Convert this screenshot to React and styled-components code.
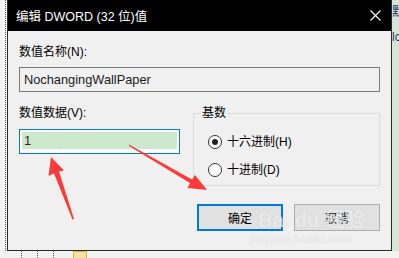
import React from "react";
import styled, { createGlobalStyle } from "styled-components";

const Global = createGlobalStyle`
  body {
    margin: 0;
    background: #f2f2f2;
    font-family: "Liberation Sans", "Noto Sans CJK SC", sans-serif;
  }
`;

const Screen = styled.div`
  position: relative;
  width: 399px;
  height: 258px;
  overflow: hidden;
  display: flex;
  flex-direction: column;
`;

const Row = styled.div`
  display: flex;
  height: 251px;
`;

const Gutter = styled.div`
  width: 7px;
  display: flex;
`;

const Dots = styled.div`
  margin-left: 5px;
  width: 0;
  border-left: 1px dotted #555;
`;

const Dialog = styled.div`
  width: 383px;
  border: 1px solid #2a2a2a;
  border-top: none;
  background: #f0f0f0;
  display: flex;
  flex-direction: column;
`;

const TitleBar = styled.div`
  height: 31px;
  background: #000;
  color: #fff;
  display: flex;
  align-items: center;
  justify-content: space-between;
  padding: 0 10px 0 8px;
  font-size: 12.5px;
`;

const Body = styled.div`
  padding: 13px 11px 0 11px;
  display: flex;
  flex-direction: column;
`;

const Label = styled.div`
  font-size: 12px;
  line-height: 16px;
  color: #000;
`;

const NameBox = styled.div`
  margin-top: 7px;
  height: 23px;
  border: 1px solid #7a7a7a;
  background: #f0f0f0;
  display: flex;
  align-items: center;
  padding-left: 4px;
  font-size: 12.8px;
  color: #1b1b1b;
`;

const Split = styled.div`
  display: flex;
  margin-top: 13px;
  gap: 13px;
`;

const Column = styled.div`
  width: 161px;
  display: flex;
  flex-direction: column;
`;

const DataBox = styled.div`
  margin-top: 8px;
  border: 1px solid #0078d7;
  background: #fff;
  padding: 2px;
  box-sizing: border-box;
  height: 25px;
`;

const Selected = styled.div`
  height: 17px;
  background: #cce8cf;
  font-size: 13px;
  line-height: 17px;
  padding-left: 2px;
  color: #3a2a10;
`;

const Group = styled.fieldset`
  flex: 1;
  margin: 0;
  height: 81px;
  box-sizing: border-box;
  border: 1px solid #dcdcdc;
  padding: 14px 0 0 14px;
  display: flex;
  flex-direction: column;
  gap: 14px;
`;

const Legend = styled.legend`
  font-size: 12px;
  line-height: 16px;
  padding: 0 1px;
  margin-left: -7px;
`;

const Radio = styled.div`
  display: flex;
  align-items: center;
  gap: 5px;
  font-size: 12px;
  line-height: 13px;
`;

const Circle = styled.span`
  width: 12px;
  height: 12px;
  border-radius: 50%;
  border: 1px solid #333;
  background: #fff;
  display: flex;
  align-items: center;
  justify-content: center;
  &::after {
    content: "";
    width: 6px;
    height: 6px;
    border-radius: 50%;
    background: ${(p) => (p.$on ? "#222" : "transparent")};
  }
`;

const Buttons = styled.div`
  display: flex;
  justify-content: flex-end;
  gap: 11px;
  margin-top: 18px;
`;

const Button = styled.div`
  width: 86px;
  height: 27px;
  box-sizing: border-box;
  background: #e1e1e1;
  border: ${(p) => (p.$primary ? "2px solid #0078d7" : "1px solid #adadad")};
  display: flex;
  align-items: center;
  justify-content: center;
  font-size: 12px;
  color: #000;
`;

const RightStrip = styled.div`
  flex: 1;
  background: #d3e6d5;
  overflow: hidden;
  font-size: 12px;
  color: #1a3a6a;
  line-height: 25px;
  white-space: nowrap;
`;

const Bottom = styled.div`
  flex: 1;
  display: flex;
  align-items: flex-start;
  gap: 14px;
  padding-left: 21px;
`;

const Dot = styled.span`
  width: 1px;
  height: 7px;
  border-left: 1px dotted #555;
`;

const Folder = styled.span`
  margin-left: 4px;
  width: 12px;
  height: 6px;
  border: 1px solid #d4b24a;
  border-bottom: none;
  background: #f4e3a0;
`;

const Overlay = styled.svg`
  position: absolute;
  left: 0;
  top: 0;
  pointer-events: none;
`;

const Watermark = styled.div`
  position: absolute;
  left: 250px;
  top: 208px;
  color: rgba(255, 255, 255, 0.6);
  pointer-events: none;
  text-shadow: 0 0 1px rgba(170, 170, 170, 0.45);
`;

const MarkBig = styled.div`
  font-size: 20px;
  font-weight: bold;
  line-height: 24px;
  margin-left: 8px;
`;

const MarkSmall = styled.div`
  font-size: 12px;
  line-height: 14px;
  letter-spacing: 0.3px;
`;

export default function App() {
  return (
    <Screen>
      <Global />
      <Row>
        <Gutter>
          <Dots />
        </Gutter>
        <Dialog>
          <TitleBar>
            <span>编辑 DWORD (32 位)值</span>
            <svg width="11" height="11" viewBox="0 0 11 11">
              <path d="M0.5 0.5 L10.5 10.5 M10.5 0.5 L0.5 10.5" stroke="#fff" strokeWidth="1.1" />
            </svg>
          </TitleBar>
          <Body>
            <Label>数值名称(N):</Label>
            <NameBox>NochangingWallPaper</NameBox>
            <Split>
              <Column>
                <Label>数值数据(V):</Label>
                <DataBox>
                  <Selected>1</Selected>
                </DataBox>
              </Column>
              <Group>
                <Legend>基数</Legend>
                <Radio>
                  <Circle $on />
                  十六进制(H)
                </Radio>
                <Radio>
                  <Circle />
                  十进制(D)
                </Radio>
              </Group>
            </Split>
            <Buttons>
              <Button $primary>确定</Button>
              <Button>取消</Button>
            </Buttons>
          </Body>
        </Dialog>
        <RightStrip>
          默
          <br />
          lc
        </RightStrip>
      </Row>
      <Bottom>
        <Dot />
        <Dot />
        <Dot />
        <Folder />
      </Bottom>
      <Watermark>
        <MarkBig>Bai du 经验</MarkBig>
        <MarkSmall>jingyan.baidu.com</MarkSmall>
      </Watermark>
      <Overlay width="399" height="258">
        <polygon
          points="51,157 64,170.5 59,171.5 74,219 72.5,219.5 54,173.5 48.5,176"
          fill="#fc3a3a"
        />
        <polygon
          points="129,144.5 192,179.5 195,175 207,190 187.5,188 190,183 129,146"
          fill="#fc3a3a"
        />
      </Overlay>
    </Screen>
  );
}
